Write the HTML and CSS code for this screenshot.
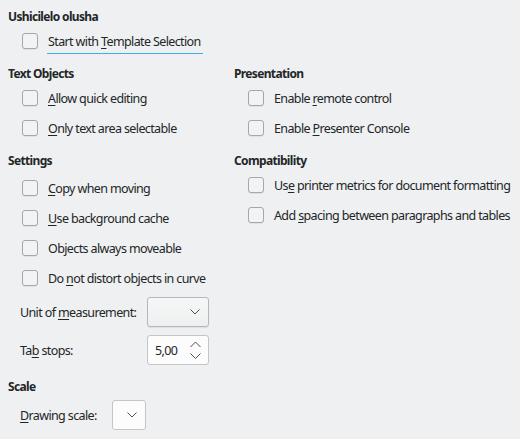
FILE: index.html
```html
<!DOCTYPE html>
<html>
<head>
<meta charset="utf-8">
<link rel="stylesheet" href="styles.css">
</head>
<body>
<div class="page">
  <section class="group first">
    <h3 class="heading">Ushicilelo olusha</h3>
    <div class="row gap1">
      <span class="check"></span>
      <span class="label focus">Start with <u>T</u>emplate Selection</span>
    </div>
  </section>

  <div class="columns">
    <section class="group">
      <h3 class="heading">Text Objects</h3>
      <div class="row gap1"><span class="check"></span><span class="label"><u>A</u>llow quick editing</span></div>
      <div class="row"><span class="check"></span><span class="label"><u>O</u>nly text area selectable</span></div>
    </section>
    <section class="group">
      <h3 class="heading">Presentation</h3>
      <div class="row gap1"><span class="check"></span><span class="label">Enable <u>r</u>emote control</span></div>
      <div class="row"><span class="check"></span><span class="label">Enable <u>P</u>resenter Console</span></div>
    </section>

    <section class="group">
      <h3 class="heading">Settings</h3>
      <div class="row gap4"><span class="check"></span><span class="label"><u>C</u>opy when moving</span></div>
      <div class="row"><span class="check"></span><span class="label"><u>U</u>se background cache</span></div>
      <div class="row"><span class="check"></span><span class="label">Ob<u>j</u>ects always moveable</span></div>
      <div class="row"><span class="check"></span><span class="label">Do <u>n</u>ot distort objects in curve</span></div>
      <div class="fields">
        <span class="flabel">Unit of <u>m</u>easurement:</span>
        <span class="combo"><svg class="chev" width="10" height="6" viewBox="0 0 10 6"><path d="M0.5 0.5 L5 5 L9.5 0.5" fill="none" stroke="#4d4f51" stroke-width="1"/></svg></span>
        <span class="flabel">Ta<u>b</u> stops:</span>
        <span class="spin"><span class="value">5,00</span><svg class="arrows" width="11" height="19" viewBox="0 0 11 19"><path d="M0.5 6 L5.5 1 L10.5 6" fill="none" stroke="#4d4f51" stroke-width="1"/><path d="M0.5 12.5 L5.5 17.5 L10.5 12.5" fill="none" stroke="#4d4f51" stroke-width="1"/></svg></span>
      </div>
    </section>
    <section class="group">
      <h3 class="heading">Compatibility</h3>
      <div class="row gap1"><span class="check"></span><span class="label">Us<u>e</u> printer metrics for document formatting</span></div>
      <div class="row"><span class="check"></span><span class="label">Add <u>s</u>pacing between paragraphs and tables</span></div>
    </section>
  </div>

  <section class="group scale">
    <h3 class="heading">Scale</h3>
    <div class="fields small">
      <span class="flabel"><u>D</u>rawing scale:</span>
      <span class="combo edit"><svg class="chev" width="10" height="6" viewBox="0 0 10 6"><path d="M0.5 0.5 L5 5 L9.5 0.5" fill="none" stroke="#4d4f51" stroke-width="1"/></svg></span>
    </div>
  </section>
</div>
</body>
</html>
```

FILE: styles.css
```css
html, body {
  margin: 0;
  padding: 0;
  background: #eff0f1;
}
body {
  font-family: "Noto Sans", "DejaVu Sans", sans-serif;
  font-size: 12.5px;
  letter-spacing: -0.62px;
  color: #232627;
  width: 520px;
  height: 439px;
  overflow: hidden;
}
.page {
  padding: 7px 0 0 8px;
}
.group {
  margin-top: 8px;
}
.group.first {
  margin-top: 0;
}
.heading {
  margin: 0;
  font-size: 12px;
  font-weight: bold;
  letter-spacing: -0.65px;
  line-height: 19px;
  height: 18px;
}
.row {
  display: flex;
  align-items: center;
  height: 30px;
  padding-left: 14px;
}
.row.gap1 { margin-top: 1px; }
.row.gap4 { margin-top: 4px; }
.check {
  box-sizing: border-box;
  width: 16px;
  height: 16px;
  border: 1px solid #a5a7a9;
  border-radius: 3px;
  background: #f2f3f4;
  box-shadow: 0 1px 0 rgba(0,0,0,0.06);
  flex: none;
}
.label {
  margin-left: 10px;
  white-space: nowrap;
  line-height: 18px;
  padding-top: 1px;
}
.label u, .flabel u {
  text-underline-offset: 2px;
}
.focus {
  position: relative;
}
.focus::after {
  content: "";
  position: absolute;
  left: -1px;
  right: -2px;
  bottom: -3px;
  height: 1px;
  background: #3daee9;
}
.columns {
  display: grid;
  grid-template-columns: 226px auto;
  align-items: start;
}
.fields {
  display: grid;
  grid-template-columns: 127px 62px;
  row-gap: 8px;
  align-items: center;
  padding-left: 12px;
  margin-top: 4px;
}
.fields.small {
  grid-template-columns: 92px 34px;
  margin-top: 5px;
}
.flabel {
  white-space: nowrap;
  padding-top: 1px;
}
.combo {
  box-sizing: border-box;
  height: 30px;
  border: 1px solid #b5b7b9;
  border-radius: 3px;
  background: linear-gradient(#f6f7f7, #eeeff0);
  box-shadow: 0 1px 1px rgba(0,0,0,0.08);
  display: flex;
  align-items: center;
  justify-content: flex-end;
  padding-right: 8px;
}
.combo.edit {
  background: #fcfcfc;
  box-shadow: none;
  border-color: #c3c5c7;
  padding-right: 8px;
}
.chev {
  display: block;
}
.spin {
  box-sizing: border-box;
  height: 30px;
  border: 1px solid #c3c5c7;
  border-radius: 3px;
  background: #fcfcfc;
  display: flex;
  align-items: center;
  justify-content: space-between;
  padding: 0 7px 0 7px;
}
.arrows {
  display: block;
}
.scale {
  margin-top: 12px;
}
```
